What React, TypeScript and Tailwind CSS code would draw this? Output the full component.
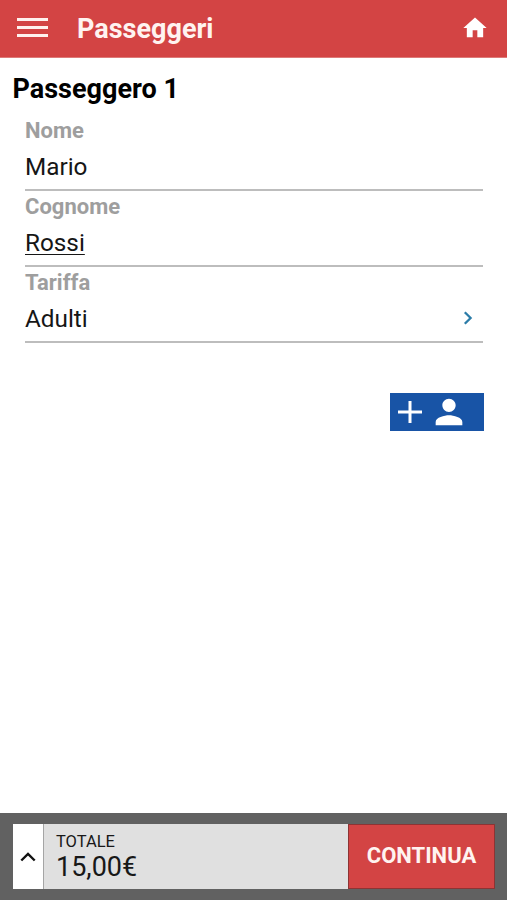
import React from 'react';

interface Field {
  label: string;
  value: string;
  underlined?: boolean;
  selectable?: boolean;
}

const fields: Field[] = [
  { label: 'Nome', value: 'Mario' },
  { label: 'Cognome', value: 'Rossi', underlined: true },
  { label: 'Tariffa', value: 'Adulti', selectable: true },
];

const Header = () => (
  <header className="flex h-[58px] shrink-0 items-center border-b border-[#dd7a78] bg-[#d34444] pr-[18.5px] pb-0.5 pl-[17px] text-white">
    <button className="flex w-[31px] flex-col gap-[5px]" aria-label="Menu">
      <span className="h-[3px] w-full bg-[#fff1ee]" />
      <span className="h-[3px] w-full bg-[#fff1ee]" />
      <span className="h-[3px] w-full bg-[#fff1ee]" />
    </button>
    <h1 className="ml-[29px] flex-1 pt-0.5 text-[27px] leading-8 font-bold text-[#fff3f0]">Passeggeri</h1>
    <button aria-label="Home">
      <svg className="h-7 w-7" viewBox="0 0 24 24" fill="currentColor">
        <path d="M10 20v-6h4v6h5v-8h3L12 3 2 12h3v8z" />
      </svg>
    </button>
  </header>
);

const FieldRow = ({ label, value, underlined, selectable }: Field) => (
  <div className="flex h-[76px] flex-col border-b-2 border-[#bdbdbd]">
    <label className="mt-1 text-[22px] leading-6 font-bold text-[#9e9e9e]">{label}</label>
    <div className="mt-2.5 flex items-center justify-between pr-2.5">
      <span className={`text-[24.3px] leading-7 text-[#161616] ${underlined ? 'underline decoration-1 underline-offset-3' : ''}`}>
        {value}
      </span>
      {selectable && (
        <svg className="mb-0.5 h-3.5 w-2.5" viewBox="0 0 10 14" fill="none" stroke="#2b7ca8" strokeWidth={2.3}>
          <path d="M1.8 1.2L7.6 7l-5.8 5.8" />
        </svg>
      )}
    </div>
  </div>
);

const Footer = () => (
  <footer className="h-[87px] shrink-0 bg-[#616161] pt-[11px] pr-3 pl-[13px]">
    <div className="flex h-[65px]">
      <button className="flex w-[31px] items-center justify-center border-r border-[#a5a5a5] bg-white" aria-label="Dettagli">
        <svg className="h-2.5 w-4" viewBox="0 0 16 10" fill="none" stroke="#111" strokeWidth={2.4}>
          <path d="M1.3 8.5L8 2l6.7 6.5" />
        </svg>
      </button>
      <div className="flex flex-1 flex-col bg-[#e0e0e0] pt-2 pl-3 text-[#181818]">
        <span className="text-[16.5px] leading-[19px]">TOTALE</span>
        <span className="text-[27px] leading-8">15,00€</span>
      </div>
      <button className="w-[147px] border border-[#8c3434] bg-[#d34444] pb-0.5 text-[22px] font-bold text-[#fff3f0]">
        CONTINUA
      </button>
    </div>
  </footer>
);

const App = () => {
  return (
    <div className="flex h-screen flex-col bg-white font-['Roboto',sans-serif]">
      <Header />
      <main className="flex flex-1 flex-col pt-[15px]">
        <h2 className="ml-[12.5px] text-[27px] leading-8 font-bold text-black">Passeggero 1</h2>
        <div className="mt-2.5 mr-6 ml-[25px]">
          {fields.map((field) => (
            <FieldRow key={field.label} {...field} />
          ))}
        </div>
        <button
          className="mt-[50px] mr-[23px] flex h-[38px] w-[94px] items-center self-end bg-[#1854a6] text-white"
          aria-label="Aggiungi passeggero"
        >
          <svg className="ml-2 h-6 w-6" viewBox="0 0 24 24" stroke="currentColor" strokeWidth={3}>
            <path d="M0 12h24M12 1v22" />
          </svg>
          <svg className="ml-[7px] h-10 w-10" viewBox="0 0 24 24" fill="currentColor">
            <path d="M12 12c2.21 0 4-1.79 4-4s-1.79-4-4-4-4 1.79-4 4 1.79 4 4 4zm0 2c-2.67 0-8 1.34-8 4v2h16v-2c0-2.66-5.33-4-8-4z" />
          </svg>
        </button>
      </main>
      <Footer />
    </div>
  );
};

export default App;
